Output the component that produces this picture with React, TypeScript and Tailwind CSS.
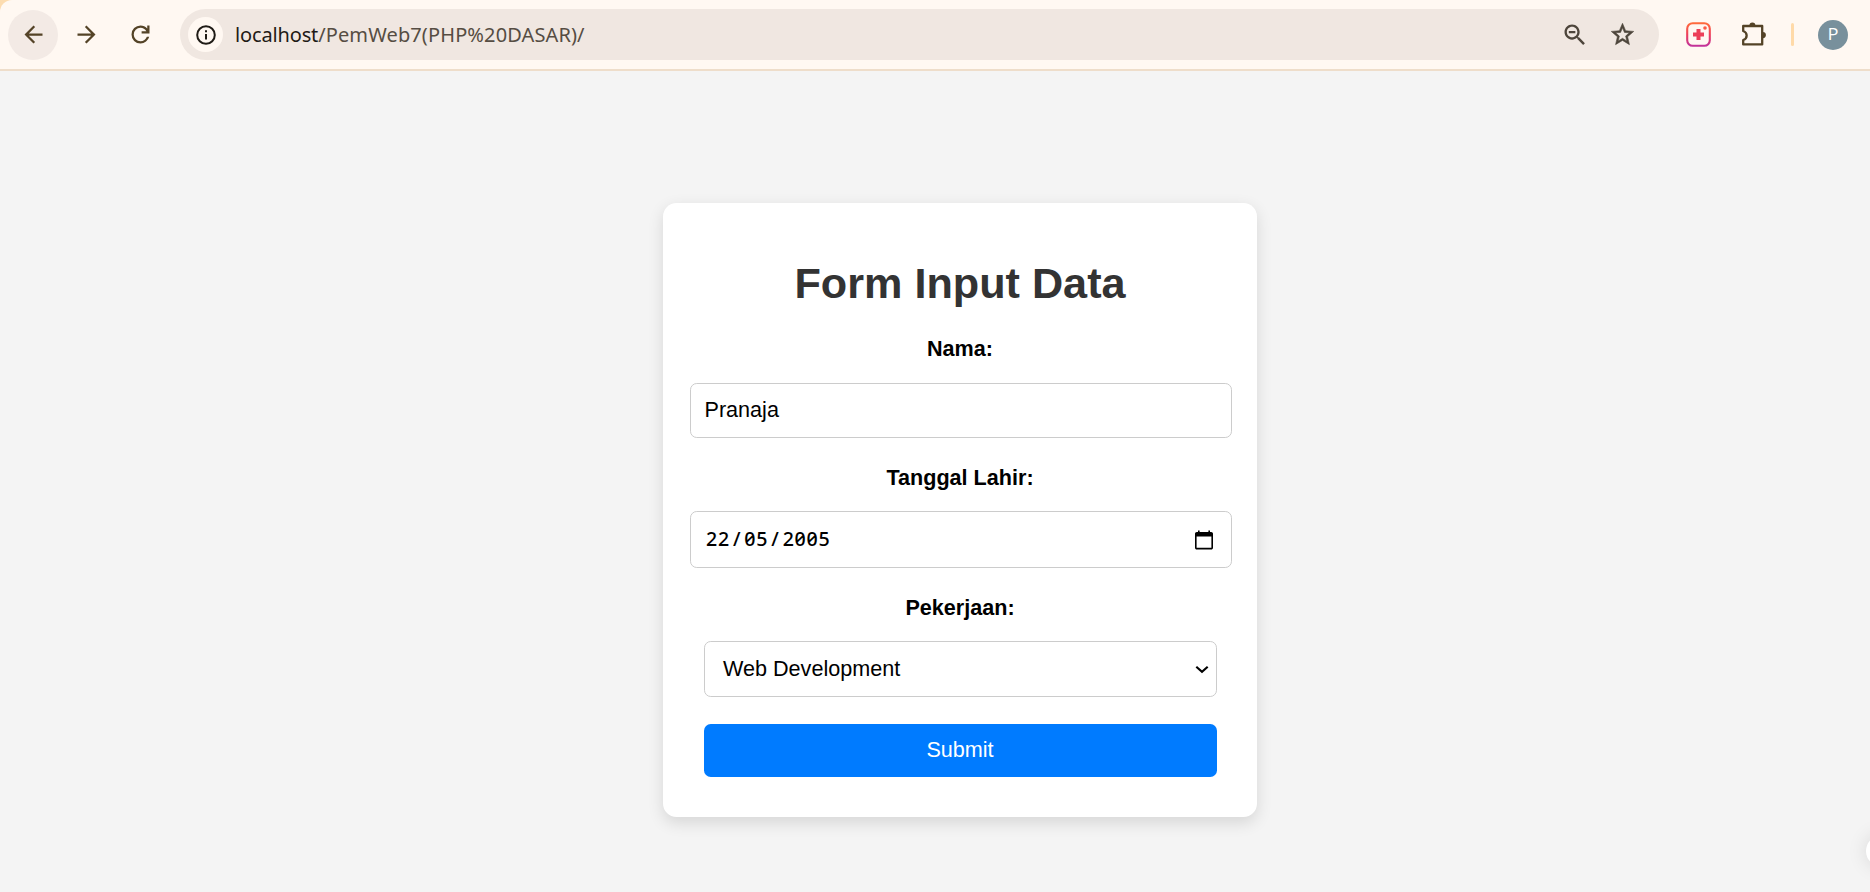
import React from "react";

const ICON = "#544327";

function ArrowBack({ flip = false }: { flip?: boolean }) {
  return (
    <svg viewBox="0 0 24 24" className={flip ? "size-[27px] rotate-180" : "size-[27px]"} fill={ICON}>
      <path d="M20 11H7.83l5.59-5.59L12 4l-8 8 8 8 1.41-1.41L7.83 13H20v-2z" />
    </svg>
  );
}

function Toolbar() {
  return (
    <div className="h-[71px] shrink-0 bg-[#fcdcb0]">
      <header className="flex h-[71px] items-center rounded-tl-[12px] border-b-2 border-[#eeddca] bg-[#fff8f2] pl-2">
        <button className="flex size-[50px] items-center justify-center rounded-full bg-[#f3eae5]">
          <ArrowBack />
        </button>
        <button className="ml-[15px] flex size-[27px] items-center justify-center">
          <ArrowBack flip />
        </button>
        <button className="ml-[27px] flex size-[27px] items-center justify-center">
          <svg viewBox="0 -960 960 960" className="size-[27px]" fill={ICON}>
            <path d="M480-160q-134 0-227-93t-93-227q0-134 93-227t227-93q69 0 132 28.5T720-690v-110h80v280H520v-80h168q-32-56-87.5-88T480-720q-100 0-170 70t-70 170q0 100 70 170t170 70q77 0 139-44t87-116h84q-28 106-114 173t-196 67Z" />
          </svg>
        </button>
        <div className="ml-[26px] flex h-[51px] w-[1479px] items-center rounded-full bg-[#f0e7e1] pr-[23px] pl-2">
          <span className="flex size-[35px] items-center justify-center rounded-full bg-[#fff8f2]">
            <svg viewBox="0 0 20 20" className="size-5" fill="none" stroke="#1f1b16" strokeWidth="2">
              <circle cx="10" cy="10" r="8.8" />
              <path d="M10 9v5.5M10 5.2v2" />
            </svg>
          </span>
          <span className="ml-3 flex-1 font-['Noto_Sans','Open_Sans',sans-serif] text-[20px] text-[#564d43]">
            <span className="tracking-[-0.15px] text-[#1f1b16]">localhost</span>
            <span className="tracking-[0.12px]">/PemWeb7(PHP%20DASAR)/</span>
          </span>
          <svg viewBox="0 0 24 24" className="size-[28px]" fill="#4d453b">
            <path d="M15.5 14h-.79l-.28-.27C15.41 12.59 16 11.11 16 9.5 16 5.91 13.09 3 9.5 3S3 5.91 3 9.5 5.91 16 9.5 16c1.61 0 3.09-.59 4.23-1.57l.27.28v.79l5 4.99L20.49 19l-4.99-5zm-6 0C7.01 14 5 11.99 5 9.5S7.01 5 9.5 5 14 7.01 14 9.5 11.99 14 9.5 14zM6.7 8.6h5.6v1.8H6.7z" />
          </svg>
          <svg
            viewBox="0 0 24 24"
            className="ml-5 size-[27px]"
            fill="#4d453b"
            stroke="#4d453b"
            strokeWidth="0.5"
          >
            <path d="M22 9.24l-7.19-.62L12 2 9.19 8.63 2 9.24l5.46 4.73L5.82 21 12 17.27 18.18 21l-1.63-7.03L22 9.24zM12 15.4l-3.76 2.27 1-4.28-3.32-2.88 4.38-.38L12 6.1l1.71 4.04 4.38.38-3.32 2.88 1 4.28L12 15.4z" />
          </svg>
        </div>
        <svg viewBox="0 0 25 25" className="ml-[27px] size-[25px]" fill="none">
          <defs>
            <linearGradient id="ext" x1="0" y1="0" x2="0" y2="1">
              <stop offset="0" stopColor="#ff6a3c" />
              <stop offset="0.5" stopColor="#ee3f5c" />
              <stop offset="1" stopColor="#c2329a" />
            </linearGradient>
          </defs>
          <rect x="1.2" y="1.2" width="22.6" height="22.6" rx="5.5" stroke="url(#ext)" strokeWidth="2.1" />
          <path d="M12.5 7v11M7 12.5h11" stroke="#ec3f58" strokeWidth="4" />
          <circle cx="19" cy="6" r="1.8" fill="#fb5a45" />
        </svg>
        <svg viewBox="0 0 25 25" className="ml-[30px] size-[25px]" fill="none">
          <path
            d="M2.2 4h19v18.4H2.2v-4.4c4.6-1.6 4.6-7.4 0-9z"
            stroke={ICON}
            strokeWidth="2.3"
            strokeLinejoin="round"
          />
          <path d="M8.4 3.4a3 3 0 0 1 6 0zM21.8 10a3.1 3.1 0 0 1 0 6.2z" fill={ICON} />
        </svg>
        <span className="ml-[25px] h-[23px] w-[3px] rounded-sm bg-[#ffdaa9]" />
        <span className="ml-6 flex size-[30px] items-center justify-center rounded-full bg-[#78909c] font-[Roboto,sans-serif] text-[16px] text-white">
          P
        </span>
      </header>
    </div>
  );
}

function Label({ children }: { children: React.ReactNode }) {
  return <span className="block h-[25px] text-center leading-[25px] font-bold">{children}</span>;
}

export default function App() {
  return (
    <div className="flex h-[892px] flex-col overflow-hidden bg-[#f4f4f4]">
      <Toolbar />
      <main className="relative flex-1 overflow-hidden pt-[132px] pl-[663px]">
        <form className="flex h-[614px] w-[594px] flex-col rounded-[13.5px] bg-white px-[27px] pt-[55px] font-['Liberation_Sans',Arial,sans-serif] text-[21.6px] text-black shadow-[0_5.4px_16px_rgba(0,0,0,0.12)]">
          <h1 className="h-[50px] text-center text-[43.2px] leading-[50px] font-bold text-[#333333]">
            Form Input Data
          </h1>
          <div className="mt-7">
            <Label>Nama:</Label>
          </div>
          <div className="mt-[22px] flex h-[55px] w-[542px] shrink-0 items-center rounded-[6.75px] border border-[#cccccc] px-[13.5px]">
            Pranaja
          </div>
          <div className="mt-[27px]">
            <Label>Tanggal Lahir:</Label>
          </div>
          <div className="mt-[21px] flex h-[57px] w-[542px] shrink-0 items-center rounded-[6.75px] border border-[#cccccc] pr-[17px] pl-[15px]">
            <span className="flex flex-1 pb-[2px] font-['Noto_Sans','Open_Sans',sans-serif] text-[19.6px] font-medium tracking-[0.7px] [font-feature-settings:'zero','tnum']">
              <span>22</span>
              <span className="w-[14.5px] text-center">/</span>
              <span>05</span>
              <span className="w-[14.5px] text-center">/</span>
              <span>2005</span>
            </span>
            <svg viewBox="0 0 20 20" className="size-5">
              <path
                fillRule="evenodd"
                d="M4 0.6h1.6v1.4h8.8v-1.4h1.6v1.4h1.2c1 0 1.8.8 1.8 1.8v14c0 1-.8 1.8-1.8 1.8H2.8c-1 0-1.8-.8-1.8-1.8v-14c0-1 .8-1.8 1.8-1.8h1.2zM2.6 6.5v11.3h14.8v-11.3z"
              />
            </svg>
          </div>
          <div className="mt-[27px]">
            <Label>Pekerjaan:</Label>
          </div>
          <div className="mx-auto mt-[21px] flex h-[56px] w-[513px] shrink-0 items-center justify-between rounded-[6.75px] border border-[#cccccc] pr-[7px] pl-[18.5px]">
            Web Development
            <svg viewBox="0 0 14 9" className="h-[9px] w-[14px]" fill="none" stroke="black" strokeWidth="2.1">
              <path d="M1.3 1.7l5.7 5.2 5.7-5.2" />
            </svg>
          </div>
          <button
            type="button"
            className="mx-auto mt-[27px] h-[53px] w-[513px] shrink-0 rounded-[6.75px] bg-[#007bff] text-white"
          >
            Submit
          </button>
        </form>
        <span className="absolute top-[764px] left-[1866px] size-8 rounded-full bg-white shadow-[0_0_20px_rgba(0,0,0,0.12)]" />
      </main>
    </div>
  );
}
